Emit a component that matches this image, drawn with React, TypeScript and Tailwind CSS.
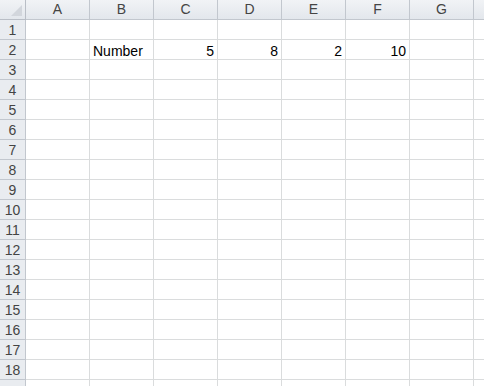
import React from "react";

const cols = ["A", "B", "C", "D", "E", "F", "G", "H"];
const rows = Array.from({ length: 19 }, (_, i) => i + 1);

function cellContent(r: number, c: string): { text: string; right: boolean } | null {
  if (r !== 2) return null;
  const m: Record<string, { text: string; right: boolean }> = {
    B: { text: "Number", right: false },
    C: { text: "5", right: true },
    D: { text: "8", right: true },
    E: { text: "2", right: true },
    F: { text: "10", right: true },
  };
  return m[c] ?? null;
}

export default function App() {
  return (
    <div
      className="w-[484px] h-[386px] overflow-hidden bg-white"
      style={{ fontFamily: '"Liberation Sans", Arial, sans-serif' }}
    >
      <div className="flex h-[20px]">
        <div className="relative w-[26px] shrink-0 h-[20px] bg-gradient-to-b from-[#f1f3f6] to-[#e3e7ec] border-r border-b border-[#b9bec6]">
          <svg className="absolute right-[3px] bottom-[3px]" width="11" height="11" viewBox="0 0 11 11">
            <polygon points="11,0 11,11 0,11" fill="#d2d6dc" />
          </svg>
        </div>
        {cols.map((c) => (
          <div
            key={c}
            className="w-[64px] shrink-0 h-[20px] bg-gradient-to-b from-[#f1f3f6] to-[#e3e7ec] border-r border-b border-[#c2c7ce] flex items-center justify-center text-[14px] text-[#444444]"
          >
            {c === "H" ? null : c}
          </div>
        ))}
      </div>
      {rows.map((r) => (
        <div key={r} className="flex h-[20px]">
          <div className="w-[26px] shrink-0 h-[20px] bg-[#e9ecf0] border-r border-b border-[#c2c7ce] flex items-center justify-center pt-[1px] text-[14px] text-[#444444]">
            {r === 19 ? null : r}
          </div>
          {cols.map((c) => {
            const cc = cellContent(r, c);
            return (
              <div
                key={c}
                className={
                  "w-[64px] shrink-0 h-[20px] border-r border-b border-[#dadcdd] flex items-center pt-[3px] text-[14px] text-black overflow-visible whitespace-nowrap " +
                  (cc && cc.right ? "justify-end pr-[3px]" : "justify-start pl-[3px]")
                }
              >
                {cc ? cc.text : null}
              </div>
            );
          })}
        </div>
      ))}
    </div>
  );
}
